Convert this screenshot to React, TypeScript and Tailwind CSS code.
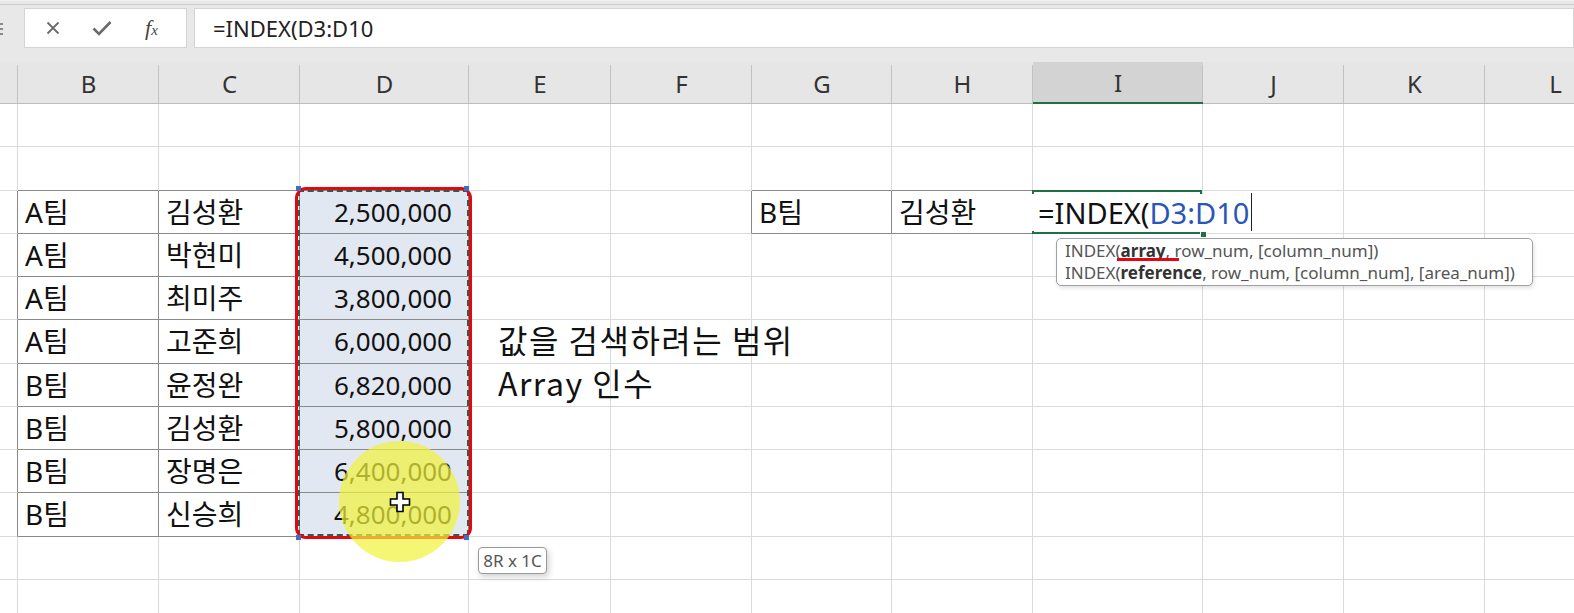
import React from "react";

type Col = { key: string; w: number };

const COLS: Col[] = [
  { key: "", w: 18 },
  { key: "B", w: 141 },
  { key: "C", w: 141 },
  { key: "D", w: 169 },
  { key: "E", w: 142 },
  { key: "F", w: 141 },
  { key: "G", w: 140 },
  { key: "H", w: 141 },
  { key: "I", w: 170 },
  { key: "J", w: 141 },
  { key: "K", w: 141 },
  { key: "L", w: 141 },
];

const DATA: [string, string, string][] = [
  ["A팀", "김성환", "2,500,000"],
  ["A팀", "박현미", "4,500,000"],
  ["A팀", "최미주", "3,800,000"],
  ["A팀", "고준희", "6,000,000"],
  ["B팀", "윤정완", "6,820,000"],
  ["B팀", "김성환", "5,800,000"],
  ["B팀", "장명은", "6,400,000"],
  ["B팀", "신승희", "4,800,000"],
];

const ROW_COUNT = 12;

// cells that carry the dark table border
function isDark(r: number, c: number) {
  if (r >= 2 && r <= 9 && c >= 1 && c <= 3) return true;
  if (r === 2 && (c === 6 || c === 7)) return true;
  return false;
}

function cellText(r: number, c: number): string {
  if (r >= 2 && r <= 9) {
    const row = DATA[r - 2];
    if (c === 1) return row[0];
    if (c === 2) return row[1];
    if (c === 3) return row[2];
  }
  if (r === 2 && c === 6) return "B팀";
  if (r === 2 && c === 7) return "김성환";
  return "";
}

function Cell({ r, c, w }: { r: number; c: number; w: number }) {
  const darkRight = isDark(r, c) || isDark(r, c + 1);
  const darkBottom = isDark(r, c) || isDark(r + 1, c);
  const text = cellText(r, c);
  const isNumber = c === 3 && r >= 2 && r <= 9;
  const editing = r === 2 && c === 8;

  return (
    <div
      style={{ width: w }}
      className={
        "relative flex h-full shrink-0 items-center border-r border-b " +
        (darkRight ? "border-r-[#8a8a8a] " : "border-r-[#dadada] ") +
        (darkBottom ? "border-b-[#8a8a8a] " : "border-b-[#dadada] ") +
        (isNumber ? "justify-end bg-[#e2e8f2] pr-[16px] " : "pl-[7px] ") +
        (editing ? "z-10 overflow-visible " : "overflow-hidden ")
      }
    >
      {text ? (
        <span
          className={
            "whitespace-nowrap leading-none text-[#111] " + (isNumber ? "text-[26px]" : "text-[28px]")
          }
        >
          {text}
        </span>
      ) : null}
      {editing ? (
        <>
          <div className="pointer-events-none absolute -top-px -left-px h-[calc(100%+2px)] w-[calc(100%+1px)] border-2 border-[#1e7145]" />
          <span className="absolute top-[3px] left-[-1px] flex h-[37px] items-center whitespace-nowrap bg-white pr-[2px] pl-[6px] text-[29px] leading-none text-[#111]">
            =INDEX(<span className="text-[#2a56b8]">D3:D10</span>
            <span className="ml-[2px] inline-block h-[38px] w-px bg-[#222]" />
          </span>
          <div className="absolute right-[-5px] bottom-[-5px] h-[7px] w-[7px] border border-white bg-[#1e7145]" />
        </>
      ) : null}
    </div>
  );
}

function CursorPlus() {
  return (
    <svg width="22" height="22" viewBox="0 0 22 22">
      <path
        d="M8 1.5h6v6.5h6.5v6H14v6.5H8V14H1.5V8H8z"
        fill="#fff"
        stroke="#000"
        strokeWidth="1.6"
        strokeLinejoin="miter"
      />
    </svg>
  );
}

export default function App() {
  return (
    <div
      className="relative h-[613px] w-[1574px] overflow-hidden bg-white"
      style={{ fontFamily: '"Noto Sans", "Noto Sans CJK KR", sans-serif' }}
    >
      {/* formula bar */}
      <div className="relative flex h-[62px] items-start border-t border-t-[#f2f2f2] bg-[#e8e8e8] pt-[7px]">
        <div className="absolute top-[3px] left-0 h-px w-full bg-[#cfcfcf]" />
        <div className="absolute top-[22px] left-0 flex flex-col gap-[3px]">
          <span className="h-[2px] w-[3px] bg-[#8a8a8a]" />
          <span className="h-[2px] w-[3px] bg-[#8a8a8a]" />
          <span className="h-[2px] w-[3px] bg-[#8a8a8a]" />
        </div>
        <div className="ml-[24px] flex h-[40px] w-[163px] items-center border border-[#d4d4d4] bg-white">
          <svg width="14" height="14" viewBox="0 0 14 14" className="ml-[21px]">
            <path d="M1.5 1.5l11 11M12.5 1.5l-11 11" stroke="#6a6a6a" strokeWidth="1.8" />
          </svg>
          <svg width="20" height="16" viewBox="0 0 20 16" className="ml-[32px]">
            <path d="M1.5 8.5l5.5 5.5L18.5 2" fill="none" stroke="#6a6a6a" strokeWidth="2.6" />
          </svg>
          <span
            className="ml-[33px] text-[22px] italic leading-none text-[#444]"
            style={{ fontFamily: '"Liberation Serif", serif' }}
          >
            f<span className="text-[15px]">x</span>
          </span>
        </div>
        <div className="ml-[7px] flex h-[40px] flex-1 items-center border border-[#d4d4d4] bg-white pl-[18px]">
          <span className="text-[22px] leading-none text-[#222]">=INDEX(D3:D10</span>
        </div>
      </div>

      {/* column headers */}
      <div className="flex h-[42px] bg-[#e6e6e6]">
        {COLS.map((col, i) => (
          <div
            key={i}
            style={{ width: col.w }}
            className={
              "relative flex h-full shrink-0 items-center justify-center border-b border-[#bdbdbd] pt-[2px] text-[24px] text-[#333] " +
              (col.key === "I" ? "border-b-2 border-b-[#1e7145] bg-[#d3d3d3]" : "")
            }
          >
            <div className="absolute top-[3px] right-0 bottom-0 w-px bg-[#c2c2c2]" />
            {col.key}
          </div>
        ))}
      </div>

      {/* grid */}
      <div className="flex flex-col">
        {Array.from({ length: ROW_COUNT }).map((_, r) => (
          <div key={r} className="flex h-[43.25px]">
            {COLS.map((col, c) => (
              <Cell key={c} r={r} c={c} w={col.w} />
            ))}
          </div>
        ))}
      </div>

      {/* copied range: marching ants, red highlight and handles */}
      <div className="pointer-events-none absolute top-[187px] left-[295px] h-[352px] w-[177px]">
        <div className="absolute inset-[3px] border-2 border-dashed border-[#2f5e47]" />
        <div className="absolute inset-0 rounded-[11px] border-[3px] border-[#e30613]" />
        <div className="absolute -top-px left-px h-[5px] w-[5px] bg-[#3f6fc4]" />
        <div className="absolute -top-px right-[3px] h-[5px] w-[5px] bg-[#3f6fc4]" />
        <div className="absolute -bottom-px left-px h-[5px] w-[5px] bg-[#3f6fc4]" />
        <div className="absolute right-[3px] -bottom-px h-[5px] w-[5px] bg-[#3f6fc4]" />
      </div>

      {/* annotation */}
      <div
        className="absolute top-[318px] left-[498px] text-[32px] leading-[43px] tracking-[1.5px] text-[#111]"
        style={{ fontFamily: '"Noto Sans CJK KR", sans-serif' }}
      >
        <div>값을 검색하려는 범위</div>
        <div>Array 인수</div>
      </div>

      {/* mouse highlight */}
      <div className="pointer-events-none absolute top-[441px] left-[339px] flex h-[121px] w-[121px] items-center justify-center rounded-full bg-[#f2f23a]/70">
        <CursorPlus />
      </div>

      {/* selection size tip */}
      <div className="absolute top-[547px] left-[478px] flex h-[27px] w-[69px] items-center justify-center rounded-[4px] border border-[#9a9a9a] bg-white text-[17px] text-[#555] shadow-[2px_3px_6px_rgba(0,0,0,0.18)]">
        8R x 1C
      </div>

      {/* function tooltip */}
      <div className="absolute top-[238px] left-[1056px] w-[477px] rounded-[5px] border border-[#a0a0a0] bg-white py-px pl-[8px] text-[17px] leading-[22px] text-[#555] shadow-[1px_2px_4px_rgba(0,0,0,0.12)]">
        <div className="whitespace-nowrap">
          INDEX(
          <span className="relative font-bold text-[#333]">
            array
            <span className="absolute top-[19px] -left-[4px] h-[3px] w-[62px] bg-[#e30613]" />
          </span>
          , row_num, [column_num])
        </div>
        <div className="whitespace-nowrap">
          INDEX(<span className="font-bold text-[#333]">reference</span>, row_num, [column_num], [area_num])
        </div>
      </div>
    </div>
  );
}
